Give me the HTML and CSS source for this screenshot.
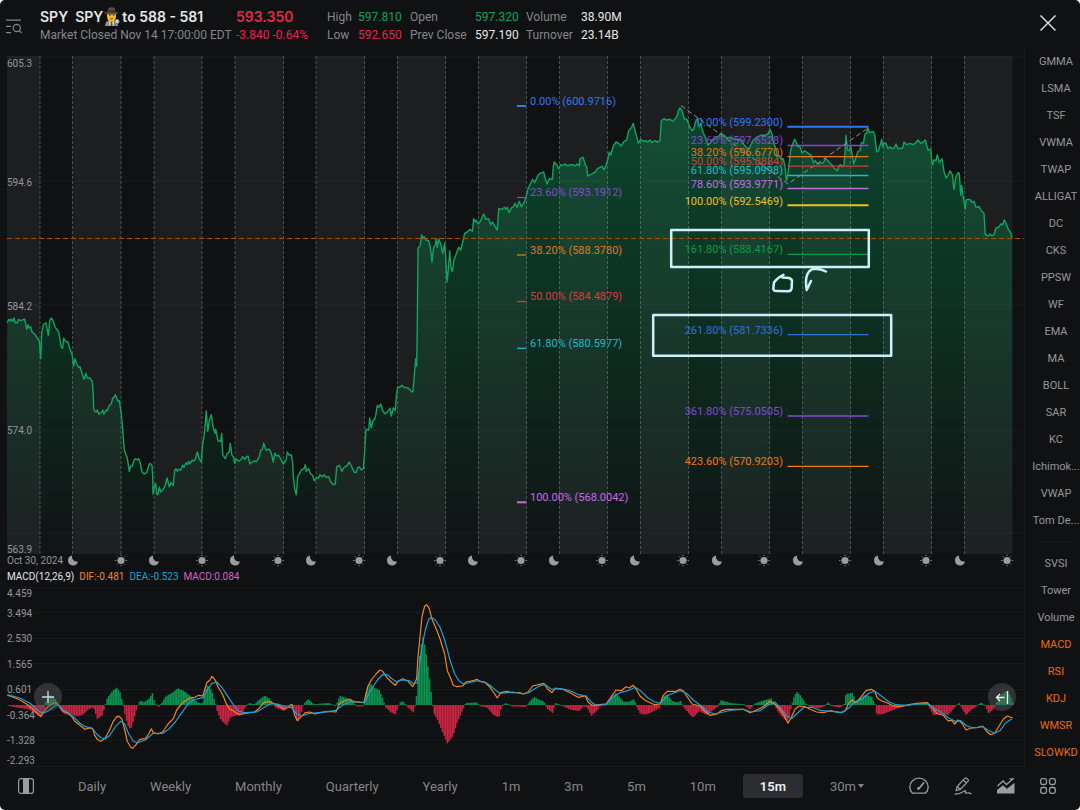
FILE: index.html
```html
<!DOCTYPE html>
<html lang="en">
<head>
<meta charset="utf-8">
<meta name="viewport" content="width=device-width, initial-scale=1">
<title>SPY chart</title>
<link rel="stylesheet" href="styles.css">
</head>
<body>
<div class="app">
  <header class="header">
    <button class="icon-button" aria-label="Search symbols">
      <svg width="16" height="16" viewBox="0 0 16 16" fill="none" stroke="#85868a" stroke-width="1.2">
        <path d="M0 1.2h15M0 7.4h5M0 13.6h5"/><circle cx="10.8" cy="9" r="3.6"/><path d="M13.4 11.6l2.3 2.4"/>
      </svg>
    </button>
    <div class="quote">
      <h1 class="title">SPY&nbsp; SPY
        <svg class="detective" width="16" height="19" viewBox="0 0 16 19" role="img" aria-label="detective">
          <path d="M1 19q0-5 4-5.500h5q4 .5 4 5.500z" fill="#a08a6c"/>
          <path d="M5 13.500l2.500 3.500 2.500-3.500-.5 5.500h-4z" fill="#dfe5ea"/>
          <path d="M7 14.500h1l.7 4.500H6.300z" fill="#555"/>
          <path d="M3 6h9v3q0 5.500-4.500 5.500T3 9z" fill="#f7b928"/>
          <path d="M5 8.500h1.500M9 8.500h1.500M6 11.500q1.500 1 3 0" stroke="#674018" stroke-width=".9" fill="none"/>
          <path d="M3.300 5L4.600 1q3-1.500 6 0L12 5z" fill="#5b5142"/>
          <path d="M3.300 3.500h8.700v1.400H3.300z" fill="#292622"/>
          <path d="M0 5.500q7.500-2 15 0-1 2-7.500 2T0 5.500z" fill="#514839"/>
          <circle cx="13" cy="14.500" r="2.200" fill="#b9dbea" stroke="#6c747a" stroke-width=".8"/>
          <path d="M12 16.500l-2 2" stroke="#777" stroke-width="1.200"/>
        </svg>
        to 588 - 581</h1>
      <strong class="price">593.350</strong>
      <span class="label">High</span><span class="value up">597.810</span>
      <span class="label">Open</span><span class="value up">597.320</span>
      <span class="label">Volume</span><span class="value">38.90M</span>
      <span class="label status">Market Closed Nov 14 17:00:00 EDT</span>
      <span class="value down">-3.840 -0.64%</span>
      <span class="label">Low</span><span class="value down">592.650</span>
      <span class="label">Prev Close</span><span class="value">597.190</span>
      <span class="label">Turnover</span><span class="value">23.14B</span>
    </div>
    <button class="icon-button close" aria-label="Close">
      <svg width="16" height="16" viewBox="0 0 16 16" stroke="#e8e8e8" stroke-width="1.4"><path d="M.5 .5l15 15M15.500 .5l-15 15"/></svg>
    </button>
  </header>

  <main class="workspace">
    <section class="charts">
      <svg class="chart" id="price-chart" viewBox="0 50 1024 518" role="img" aria-label="SPY 15 minute price">
        <defs>
          <linearGradient id="area-fill" gradientUnits="userSpaceOnUse" x1="0" y1="100" x2="0" y2="554">
            <stop offset="0" stop-color="#00a558" stop-opacity=".36"/>
            <stop offset=".35" stop-color="#00a558" stop-opacity=".25"/>
            <stop offset=".65" stop-color="#00a558" stop-opacity=".14"/>
            <stop offset="1" stop-color="#00a558" stop-opacity=".02"/>
          </linearGradient>
          <g id="moon"><path d="M-1 -4.900A5 5 0 1 0 4.900 1A5 5 0 0 1 -1 -4.900z" fill="#9b9c9e"/></g>
          <g id="sun"><circle r="3.600" fill="#9b9c9e"/><path d="M0-5.800v1.200M0 4.600v1.200M-5.800 0h1.200M4.600 0h1.200M-4.100-4.100l.8.8M3.300 3.300l.8.8M-4.100 4.100l.8-.8M3.300-3.300l.8-.8" stroke="#9b9c9e"/></g>
        </defs>
        <g id="bands"></g>
        <path class="grid" d="M7 57H1024M7 181H1024M7 305H1024M7 430H1024M7 533H1024"/>
        <path id="price-area" fill="url(#area-fill)"/>
        <g id="dividers"></g>
        <path id="price-line" class="price-line"/>
        <path class="current" d="M7 238.500H1024"/>
        <path class="trend" d="M681 105.500L788 184L868 128"/>
        <g id="fibs"></g>
        <g class="marker">
          <rect x="671.200" y="230" width="197.600" height="37"/>
          <rect x="653.200" y="315" width="238" height="40.700"/>
          <path d="M783.500 274.800Q777 278 774 282.500L773.300 288.500Q773.300 291.300 777 291L788 291.300Q792 291 791.700 287L792 280.500Q791 277.500 786 277.800L782.500 277.600"/>
          <path d="M811 281L806.700 290Q805 279 807.500 274Q810 269 815 268.800Q821 269 826 271.500"/>
        </g>
        <g class="axis">
          <text x="7" y="67">605.3</text><text x="7" y="185.500">594.6</text><text x="7" y="310">584.2</text>
          <text x="7" y="434">574.0</text><text x="7" y="553">563.9</text><text x="7" y="564">Oct 30, 2024</text>
        </g>
        <g id="sessions"></g>
      </svg>
      <div class="legend">
        <span>MACD(12,26,9)</span><span class="dif">DIF:-0.481</span><span class="dea">DEA:-0.523</span><span class="macd">MACD:0.084</span>
      </div>
      <div class="indicator">
        <svg class="chart" id="macd-chart" viewBox="0 585 1024 182" role="img" aria-label="MACD">
          <path class="grid" d="M7 587.500H1024M7 612.500H1024M7 638.500H1024M7 663.500H1024M7 689.500H1024M7 715.500H1024M7 740.500H1024M7 766.500H1024"/>
          <g id="bars"></g>
          <g class="axis">
            <text x="7" y="597">4.459</text><text x="7" y="617">3.494</text><text x="7" y="642">2.530</text><text x="7" y="668">1.565</text>
            <text x="7" y="693">0.601</text><text x="7" y="719">-0.364</text><text x="7" y="744">-1.328</text><text x="7" y="764">-2.293</text>
          </g>
          <path id="dif-line" class="line dif-stroke"/>
          <path id="dea-line" class="line dea-stroke"/>
        </svg>
        <button class="round add" aria-label="Add indicator"><svg width="12" height="12" viewBox="0 0 12 12" stroke="#d5d6d7" stroke-width="1.300"><path d="M6 0v12M0 6h12"/></svg></button>
        <button class="round latest" aria-label="Go to latest"><svg width="14" height="13" viewBox="0 0 14 13" stroke="#f0f0f0" stroke-width="1.300" fill="none"><path d="M1.500 6.500h8M5 3L1.500 6.500 5 10M12.500 0v13"/></svg></button>
      </div>
    </section>
    <nav class="sidebar" aria-label="Indicators">
      <button>GMMA</button><button>LSMA</button><button>TSF</button><button>VWMA</button><button>TWAP</button><button>ALLIGAT</button>
      <button>DC</button><button>CKS</button><button>PPSW</button><button>WF</button><button>EMA</button><button>MA</button>
      <button>BOLL</button><button>SAR</button><button>KC</button><button>Ichimok...</button><button>VWAP</button><button>Tom De...</button>
      <hr>
      <button>SVSI</button><button>Tower</button><button>Volume</button><button class="on">MACD</button><button class="on">RSI</button>
      <button class="on">KDJ</button><button class="on">WMSR</button><button class="on">SLOWKD</button>
    </nav>
  </main>

  <footer class="toolbar">
    <button class="icon-button" aria-label="Panel layout">
      <svg width="16" height="16" viewBox="0 0 16 16"><rect x=".6" y=".6" width="14.800" height="14.800" rx="2.500" fill="none" stroke="#9b9c9e" stroke-width="1.200"/><path d="M5 1h6v14H5z" fill="#9b9c9e"/></svg>
    </button>
    <div class="periods">
      <button>Daily</button><button>Weekly</button><button>Monthly</button><button>Quarterly</button><button>Yearly</button>
      <button>1m</button><button>3m</button><button>5m</button><button>10m</button><button class="selected">15m</button>
      <button class="more">30m<svg width="6" height="4" viewBox="0 0 6 4"><path d="M0 0h6L3 4z" fill="#85868a"/></svg></button>
    </div>
    <div class="tools">
      <button class="icon-button" aria-label="Gauge"><svg width="20" height="18" viewBox="0 0 20 18" fill="none" stroke="#9b9c9e" stroke-width="1.300"><path d="M3.500 16.200Q.8 13.500 .8 10A9.200 8.800 0 0 1 19.200 10Q19.200 13.500 16.500 16.200z" stroke-linejoin="round"/><path d="M10 11.500L15 5.500" stroke-width="1.800"/><circle cx="9.500" cy="11.500" r=".8"/></svg></button>
      <button class="icon-button" aria-label="Draw"><svg width="18" height="18" viewBox="0 0 18 18" fill="none" stroke="#9b9c9e" stroke-width="1.200" stroke-linejoin="round"><path d="M3.200 9.500L11 1.200q.8-.7 1.600 0l1.500 1.400q.7.800 0 1.600L6.300 12.500 2 13.700zM9.500 3l3 3M3.200 9.500l3 3"/><path d="M1 17.200q5-.2 8.500-2.800 2.500-1.700 2 0-.8 2 1.200 1.600 2.500-.6 4.300.8" stroke-linecap="round"/></svg></button>
      <button class="icon-button" aria-label="Chart type"><svg width="18" height="16" viewBox="0 0 18 16"><path d="M.5 8L6 3l3.500 3.500L16 .8M12.500 .8H17" fill="none" stroke="#9b9c9e" stroke-width="1.300"/><path d="M0 12l6-4.800 4 3.600 7.500-6V15.500H0z" fill="#9b9c9e"/></svg></button>
      <button class="icon-button" aria-label="All tools"><svg width="16" height="16" viewBox="0 0 16 16" fill="none" stroke="#9b9c9e" stroke-width="1.300"><rect x=".7" y=".7" width="5.800" height="5.800" rx="1.800"/><rect x="9.500" y=".7" width="5.800" height="5.800" rx="1.800"/><rect x=".7" y="9.500" width="5.800" height="5.800" rx="1.800"/><rect x="9.500" y="9.500" width="5.800" height="5.800" rx="1.800"/></svg></button>
    </div>
  </footer>
</div>
<script src="chart.js"></script>
</body>
</html>
```

FILE: styles.css
```css
* { box-sizing: border-box; }
:root { --muted: #85868a; --up: #0da45c; --down: #e9274c; }
html { background: #fff; }
body { margin: 0; font-family: Roboto, "Liberation Sans", sans-serif; font-size: 12px; color: #e6e6e7; }
button { background: none; border: 0; padding: 0; font: inherit; color: inherit; cursor: pointer; }
.app { min-height: 100vh; display: flex; flex-direction: column; background: #101113; border-radius: 5px; overflow: hidden; }
.icon-button { display: flex; align-items: center; justify-content: center; }

.header { height: 46px; display: flex; align-items: center; padding: 0 24px 0 6px; }
.quote { flex: 1; margin-left: 18px; padding-top: 5px; display: grid; grid-template-columns: 196px 91px 31px 52px 65px 51px 55px auto; justify-content: start; align-items: center; grid-template-rows: 18px 18px; white-space: nowrap; }
.title, .price { margin: 0; font-family: Inter, "Liberation Sans", sans-serif; font-size: 14px; font-weight: 600; line-height: 18px; }
.detective { vertical-align: -4px; margin: 0 -1px 0 -3px; }
.price { color: var(--down); }
.label { color: var(--muted); }
.header .up { color: var(--up); }
.header .down { color: var(--down); }
.header .icon-button { padding-top: 8px; }
.header .close { padding-top: 0; }

.workspace { flex: 1; display: grid; grid-template-columns: 1fr 56px; }
.charts { min-width: 0; padding-top: 4px; }
.chart { display: block; width: 100%; height: auto; }
.grid { stroke: #fff; stroke-opacity: .04; }
.axis { fill: #94959a; font-size: 10px; }
.band { fill: #1d1e20; }
.divider { stroke: #a9b0ad; stroke-opacity: .38; stroke-dasharray: 3 2; }
.price-line { fill: none; stroke: #0fa460; stroke-width: 1.4; stroke-linejoin: round; }
.current { stroke: #a9520f; stroke-dasharray: 5 3; }
.trend { fill: none; stroke: #8b9590; stroke-dasharray: 5 3; }
.fib { font-size: 11px; }
.fib-end { text-anchor: end; }
.marker { fill: none; stroke: #cdf0fa; stroke-width: 2.5; stroke-linejoin: round; stroke-linecap: round; }
.legend { display: flex; gap: 5px; padding-left: 7px; height: 17px; align-items: center; font-size: 10px; }
.dif { color: #f5851f; }
.dea { color: #1ba0dc; }
.macd { color: #d65fd0; }
.indicator { position: relative; }
.line { fill: none; stroke-width: 1.2; stroke-linejoin: round; }
.dif-stroke { stroke: #f5851f; }
.dea-stroke { stroke: #1ba0dc; }
.bar-up { fill: #0a9450; }
.bar-down { fill: #cc2443; }
.round { position: absolute; top: 98px; width: 28px; height: 28px; border-radius: 50%; background: rgba(90, 91, 94, .45); display: flex; align-items: center; justify-content: center; }
.add { left: 34px; }
.latest { right: 8px; }

.sidebar { display: flex; flex-direction: column; border-left: 1px solid #1a1b1d; padding: 2px 0 0 7px; color: #97989b; font-size: 11px; }
.sidebar button { height: 27px; white-space: nowrap; display: flex; justify-content: center; align-items: center; }
.sidebar hr { width: 32px; margin: 7px 0 8px; border: 0; border-top: 1px solid #1a1b1d; align-self: center; }
.sidebar .on { color: #ed6a0c; }

.toolbar { height: 43px; display: flex; align-items: center; padding: 0 24px 5px 18px; }
.periods { flex: 1; display: flex; gap: 10px; margin-left: 27px; color: var(--muted); font-size: 13px; white-space: nowrap; }
.periods button { height: 24px; padding: 0 17px; border-radius: 3px; }
.periods .selected { background: #2b2d31; color: #f0f0f1; font-weight: 600; }
.more { display: flex; align-items: center; gap: 2px; }
.tools { display: flex; gap: 25px; }
```

FILE: chart.js
```js
const NS = 'http://www.w3.org/2000/svg';
const byId = (id) => document.getElementById(id);

function add(parent, name, attrs, text) {
  const node = document.createElementNS(NS, name);
  for (const key in attrs) node.setAttribute(key, attrs[key]);
  if (text) node.textContent = text;
  parent.appendChild(node);
}

// Each block holds an origin and a run of points in thirds of a unit.
function expand(blocks) {
  return blocks.flatMap(([ox, oy, run]) => run.trim().split(/\s+/).map((pair) => {
    const [x, y] = pair.split(',').map(Number);
    return [ox + x / 3, oy + y / 3];
  }));
}
const toPath = (points) => 'M' + points.map((p) => p[0].toFixed(1) + ' ' + p[1].toFixed(1)).join('L');

const edges = [7, 40, 72.5, 121, 154, 202, 235, 283.5, 316, 364.5, 397.5, 445.5, 478.5, 526.5, 559.5, 607.5, 640.5, 688.5, 721.5, 769.5, 802.5, 850.5, 883.5, 931.5, 964.5, 1012.5];
edges.forEach((x, i) => {
  if (i % 2 === 0) add(byId('bands'), 'rect', { class: 'band', x, y: 56, width: edges[i + 1] - x, height: 498 });
  if (i > 0 && i < edges.length - 1) add(byId('dividers'), 'path', { class: 'divider', d: `M${x} 56V554` });
});

[73, 154, 235, 311, 392, 473, 554, 635, 717, 798, 879, 960].forEach((x) => add(byId('sessions'), 'use', { href: '#moon', x, y: 560.5 }));
[121, 202, 278, 359, 440, 521, 602, 683, 764, 845, 926, 1007].forEach((x) => add(byId('sessions'), 'use', { href: '#sun', x, y: 560.5 }));

const price = expand([
  [0, 290, `22,98 26,88 30,92 34,88 38,94 42,84 46,98 52,98 56,88 62,92 66,90 74,88 80,118 84,104 88,114 92,110 96,126 104,132 110,142 118,152 122,206 125,130 130,104 138,98 142,120 145,136 149,92 154,84 158,90 166,112 176,126 184,172 188,174 191,144 196,154 204,156 208,172 216,192 221,228 225,206 230,222 236,232 240,230 246,250 252,268 258,250 262,264 270,264 277,274 279,300 281,356 284,364 288,366 292,360 297,373 306,366 308,360 312,372 318,360 322,362 328,346 334,342 338,324 342,322 346,314 350,324 354,334 358,332 364,372 368,420 373,480 378,494 382,504 388,544 392,528 397,528 402,512 406,506 412,510 416,506 420,516 426,546 432,552 440,548 446,528 450,520 456,526 458,560 459,612 463,592 467,580 470,612 474,614 478,592 482,606 488,600 496,586 501,564 508,590 513,578 520,586 524,540 528,536 532,544 536,538 542,540 548,526 552,532 558,518 562,524 566,514 570,522 576,510 580,514 586,508 592,486 598,508 604,516 608,460 612,440 616,400 619,362 623,424 628,390 634,374 639,410 645,430 647,418 654,452 662,454 665,430 668,494 676,506 682,490 688,486 691,460 696,496 700,500 704,520 708,506 716,514 722,510 728,500 734,508 740,500 744,498 750,522 760,514 770,514 778,500 782,480 787,478 791,460 798,480 808,478 814,490 820,516 824,490 830,498 836,496 844,510 850,522 858,510 862,486 868,496 874,494 878,520 880,560 884,596 889,614 893,560 900,548 904,540 912,536 916,524 919,544 926,536 932,552 938,556 943,572 952,562 956,564 960,554 966,560 972,554 978,562 986,560 992,576 1000,584 1006,582 1010,530 1018,526 1026,544 1032,532 1040,528 1048,516 1056,532 1062,546 1068,548 1073,534 1078,530`],
  [340, 90, `64,1140 70,1136 73,1100 78,1018 86,1020 89,984 94,1014 98,994 106,984 112,946 116,952 122,942 128,962 136,972 144,964 150,954 154,978 160,954 166,962 169,920 173,892 180,892 186,886 192,892 204,894 214,904 218,906 221,880 227,806 230,828 232,700 234,474 240,468 245,434 249,446 252,440 258,450 266,452 271,470 276,516 281,470 286,466 289,446 292,472 296,448 302,462 308,490 314,460 317,500 321,576 324,550 329,482 333,534 337,544 342,510 350,488 356,472 362,480 368,456 374,430 382,426 390,418 397,424 401,386 405,396 408,390 414,402 420,396 424,388 431,372 438,388 446,386 452,404 458,396 464,408 472,420 476,356 486,358 494,352 498,358 502,352 508,368 514,354 520,350 525,340 531,352 538,334 544,350 552,338 558,322 563,300 568,288 578,268 584,278 594,256 600,250 611,246 616,266 621,282 628,266 637,268 640,230 643,216 650,224 656,236 662,224 668,226 676,222 684,228 690,224 700,224 706,228 712,222 718,228 720,206 729,202 735,222 740,232 743,258 752,254 758,250 766,246 772,236 780,232 786,228 792,240 798,226 804,206 808,186 812,196 820,168 828,156 836,160 844,168 852,154 860,150 866,122 874,114 880,100 884,118 890,140 895,160 902,148 908,154 916,152 924,156 930,150 936,158 944,152 952,156`],
  [640, 50, `60,272 64,212 72,206 80,210 90,208 98,214 106,206 112,196 116,180 120,174 125,180 128,190 133,206 142,210 147,226 156,242 162,236 166,216 172,206 177,230 182,220 188,244 196,262 204,286 210,280 216,270 226,266 236,258 244,250 252,256 260,264 270,262 282,268 296,268 304,272 312,284 324,298 330,290 338,272 350,262 362,256 374,256 384,252 390,238 397,256 401,280 408,296 412,320 418,316 424,328 430,326 435,350 439,392 443,376 448,340 452,300 458,282 464,268 470,280 474,290 480,290 486,308 494,302 502,308 514,316 520,338 526,332 532,342 542,340 550,338 556,326 562,330 568,338 576,344 582,354 592,362 598,346 602,344 606,350 612,344 615,310 618,256 622,300 628,302 632,286 636,312 641,342 648,322 654,304 660,302 664,278 670,280 675,252 680,248`],
  [860, 0, `24,384 28,398 40,394 44,406 50,456 56,450 62,430 65,418 68,440 72,430 78,430 84,446 90,440 96,446 102,444 108,432 114,446 128,444 132,426 140,434 150,430 158,434 166,430 174,420 182,430 190,426 196,420 204,450 212,448 217,494 222,480 228,482 232,464 238,488 246,476 252,514 258,534 264,526 270,512 277,524 282,568 288,530 294,518 298,520 302,586 305,556 310,594 316,626 318,600 324,598 332,600 336,608 342,604 348,622 358,620 364,632 372,640 376,704 384,708 390,702 396,708 402,704 408,684 416,682 422,672 428,674 433,660 438,670 446,690 452,698 456,714`],
]);
byId('price-line').setAttribute('d', toPath(price));
byId('price-area').setAttribute('d', toPath(price) + 'V554H7Z');

// label, colour, line y, line width, label baseline
const leftLevels = [
  ['0.00% (600.9716)', '#3478f0', 106, 2, 105],
  ['23.60% (593.1912)', '#8549d6', 197.5, 1.3, 196],
  ['38.20% (588.3780)', '#e07a1e', 255, 1.3, 254],
  ['50.00% (584.4879)', '#d93b3b', 301.5, 1.3, 300],
  ['61.80% (580.5977)', '#22b8d0', 348.3, 1.3, 347],
  ['100.00% (568.0042)', '#c86ae8', 502.3, 2, 501],
];
const rightLevels = [
  ['0.00% (599.2300)', '#2f78f4', 126.7, 2, 125.5],
  ['23.60% (597.6528)', '#8549d6', 145.5, 1.3, 144],
  ['38.20% (596.6770)', '#e8731a', 156.7, 1.3, 155.5],
  ['50.00% (595.8884)', '#cf3f38', 166.2, 1.3, 164.5],
  ['61.80% (595.0998)', '#22b8d0', 175.5, 1.3, 174],
  ['78.60% (593.9771)', '#c86ae8', 188.5, 1.3, 187.5],
  ['100.00% (592.5469)', '#f0c020', 205.3, 2, 204.5],
  ['161.80% (588.4167)', '#0d9a48', 254.4, 1.3, 253],
  ['261.80% (581.7336)', '#2f6fe0', 334.7, 1.3, 333.5],
  ['361.80% (575.0505)', '#8549d6', 416, 1.3, 415],
  ['423.60% (570.9203)', '#f07814', 466.4, 1.3, 465],
];
const fibs = byId('fibs');
leftLevels.forEach(([label, color, y, w, base]) => {
  add(fibs, 'path', { d: `M517 ${y}H526`, stroke: color, 'stroke-width': w });
  add(fibs, 'text', { class: 'fib', x: 530, y: base, fill: color }, label);
});
rightLevels.forEach(([label, color, y, w, base]) => {
  add(fibs, 'path', { d: `M787.500 ${y}H868.500`, stroke: color, 'stroke-width': w });
  add(fibs, 'text', { class: 'fib fib-end', x: 783, y: base, fill: color }, label);
});

const dif = expand([
  [0, 550, `22,436 40,442 60,450 80,462 95,474 108,486 122,500 132,484 142,472 158,460 168,458 176,466 186,482 200,488 214,498 224,514 240,526 254,538 268,534 278,536 284,556 292,568 302,574 314,566 326,546 340,514 350,500 358,499 366,508 374,540 382,574 392,592 398,595 408,584 420,568 436,566 446,552 454,536 460,548 474,552 488,546 504,522 520,506 530,480 548,458 570,444 584,442 596,436 608,438 614,420 620,398 630,390 636,379 644,388 654,410 668,434 680,464 690,478 702,484 716,494 736,490 764,486 778,474 792,458 808,454 824,462 840,470 852,478 864,472 876,464 884,496 892,512 904,500 916,488 930,486 944,492 960,488 984,484 1008,486 1018,462 1030,454 1050,448 1060,456`],
  [340, 550, `45,456 72,458 76,440 84,408 94,390 108,372 120,360 128,364 140,382 154,396 166,406 174,394 188,386 204,394 218,410 230,386 234,320 240,260 246,200 254,168 260,164 268,176 276,208 290,240 300,266 314,312 322,362 330,380 340,406 350,410 368,408 378,396 400,392 410,388 420,394 436,398 450,412 464,432 472,444 482,428 500,424 515,428 540,428 552,432 564,426 578,408 596,404 612,400 622,416 636,428 646,414 668,418 690,428 714,442 736,438 744,456 756,466 780,464 798,462 810,446 828,420 844,422 858,410 868,414 880,406 890,420 900,438 914,450 930,458 944,464 960,462 970,436 982,424 1008,424`],
  [680, 550, `0,418 10,422 24,444 36,462 60,468 72,482 90,496 110,492 124,482 140,478 190,478 210,488 230,480 250,470 270,454 284,462 300,478 314,500 324,520 334,502 346,476 358,468 376,470 390,478 410,486 430,488 450,482 480,488 496,482 506,460 516,450 528,458 544,440 558,422 574,418 584,424 592,444 604,452 624,460 640,468 660,470 690,464 710,460 742,458 756,472 770,490 790,496 804,512 816,512 824,522 834,510 846,520 858,540 874,534 896,532 908,528 918,542 932,554 944,550 956,530 970,508 982,498 998,504`],
]);
const dea = expand([
  [0, 550, `22,434 60,444 90,460 120,486 130,490 146,482 160,470 174,464 190,480 204,488 220,500 240,520 256,530 276,534 290,552 304,564 316,566 330,556 346,530 362,514 374,522 386,552 400,574 412,578 436,570 460,550 488,550 508,536 526,516 544,490 564,462 580,450 610,442 622,420 636,400 650,396 664,410 680,434 700,464 716,484 736,488 770,486 796,470 816,460 840,464 856,472 874,472 890,492 904,498 930,490 960,488 1006,482 1030,464 1056,454`],
  [340, 550, `60,456 74,458 84,436 100,408 114,388 128,374 142,374 156,386 170,396 184,390 208,392 222,402 232,398 238,350 246,290 256,240 266,208 274,202 286,210 300,232 314,270 330,330 344,372 358,394 372,402 396,396 414,392 434,396 450,406 466,420 480,430 520,426 548,432 566,428 584,416 604,406 616,404 634,418 660,416 690,422 716,434 738,438 754,456 768,466 798,464 820,440 840,428 864,422 886,412 904,424 924,444 944,456 962,460 980,438 1000,430`],
  [680, 550, `0,422 20,430 40,450 64,468 84,486 104,492 130,486 160,480 190,478 214,486 240,482 266,464 284,456 300,472 318,496 334,506 352,490 372,472 396,472 424,482 456,484 486,488 506,474 524,456 546,448 566,430 584,424 604,438 624,454 646,464 680,466 710,462 742,460 760,474 782,486 806,504 826,514 842,512 860,528 880,534 908,530 924,540 942,550 960,542 976,520 996,506`],
]);
byId('dif-line').setAttribute('d', toPath(dif));
byId('dea-line').setAttribute('d', toPath(dea));

// Histogram outline: x and signed height around the zero line.
const ZERO = 705;
const histogram = expand([
  [0, 0, `22,-2 50,-8 80,-12 100,-22 122,-38 132,-6 133,6 145,30 160,24 172,4 176,-6 190,-28 210,-26 225,-34 245,-30 262,-14 278,-6 290,-42 305,-30 314,0 320,22 335,42 348,52 358,38 366,4 370,-16 380,-60 390,-74 400,-40 410,-4 418,14 430,8 446,20 455,36 462,6 474,-6 482,4 495,26 510,34 532,50 550,42 570,26 590,8 605,4 612,40 622,62 634,40 642,10 650,-20 660,-44 678,-62 690,-36 720,-28 736,-4 745,6 760,2 776,16 792,28 805,20 818,2 824,-8 850,-18 862,-4 870,6 877,-6 890,-54 900,-28 908,2 922,18 940,2 955,4 985,6 1006,-4 1010,10 1018,28`],
  [340, 0, `0,26 20,20 38,14 45,-4 70,-4 76,36 88,66 100,52 116,44 128,14 134,-6 150,-22 165,-28 176,6 186,12 198,-4 218,-22 226,10 232,90 238,160 246,206 254,170 262,110 270,50 274,6 280,-26 290,-44 304,-78 320,-116 336,-94 350,-50 366,-14 376,6 408,8 420,-4 440,-8 456,-28 474,-38 482,-6 495,6 512,-4 556,-6 566,10 580,24 596,16 610,10 618,-10 636,-24 644,6 655,2 668,-4 690,-14 716,-18 728,-4 738,-6 752,-32 770,-16 780,2 800,6 810,20 826,36 848,10 866,10 880,18 888,-6 900,-28 920,-28 958,-8 966,24 980,32 994,12 1008,8`],
  [680, 0, `0,12 8,-6 36,-38 56,-18 78,-30 96,-16 112,-4 120,14 150,6 190,2 208,-14 222,4 250,14 272,20 280,4 290,-18 310,-42 322,-48 332,-4 338,20 348,40 360,28 374,4 390,-6 416,-10 432,-4 442,8 456,-4 478,-8 490,2 496,34 516,36 524,12 552,30 572,26 582,4 588,-28 604,-28 630,-18 660,-6 690,4 735,6 745,-6 758,-30 784,-26 802,-30 816,-14 830,2 836,6 842,-8 856,-30 874,-12 888,-4 902,8 914,-4 924,-26 940,-10 948,10 960,30 980,44 992,20 998,4`],
]);
const PITCH = 1.62;
let k = 0;
for (let x = 7.5; x < 1012; x += PITCH) {
  while (k < histogram.length - 2 && histogram[k + 1][0] < x) k++;
  const [x0, h0] = histogram[k];
  const [x1, h1] = histogram[k + 1];
  const h = h0 + (h1 - h0) * Math.min(1, Math.max(0, (x - x0) / (x1 - x0)));
  const size = Math.max(0.8, Math.abs(h));
  add(byId('bars'), 'rect', { class: h >= 0 ? 'bar-up' : 'bar-down', x: x.toFixed(2), y: (h >= 0 ? ZERO - size : ZERO).toFixed(1), width: 1.56, height: size.toFixed(1) });
}
```
